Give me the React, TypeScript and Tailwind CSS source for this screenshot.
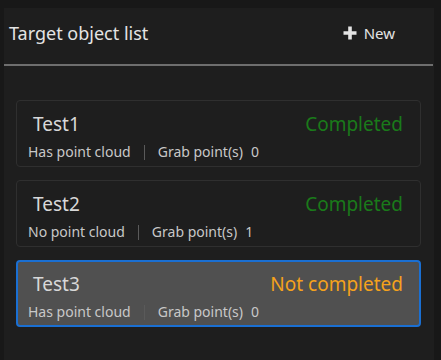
import React from "react";

type Item = { name: string; cloud: string; grab: number; done: boolean; selected?: boolean };

const items: Item[] = [
  { name: "Test1", cloud: "Has point cloud", grab: 0, done: true },
  { name: "Test2", cloud: "No point cloud", grab: 1, done: true },
  { name: "Test3", cloud: "Has point cloud", grab: 0, done: false, selected: true },
];

function Card({ item }: { item: Item }) {
  return (
    <div
      className={
        item.selected
          ? "h-[67px] rounded-[4px] border-2 border-[#1a6fd2] bg-[#505050] pl-[10px] pr-[16px] pt-[10px] flex flex-col"
          : "h-[67px] rounded-[4px] border border-[#2f2f2f] bg-[#1e1e1e] pl-[11px] pr-[17px] pt-[11px] flex flex-col"
      }
    >
      <div className="flex items-center justify-between h-[24px]">
        <span className="ml-[5px] text-[19px] leading-[24px] text-[#d8d8d8]">{item.name}</span>
        <span
          className={
            item.done
              ? "text-[19px] leading-[24px] text-[#1a7a1a]"
              : "text-[19px] leading-[24px] text-[#f5a21c]"
          }
        >
          {item.done ? "Completed" : "Not completed"}
        </span>
      </div>
      <div className="mt-[7px] flex items-center h-[18px] text-[14px] leading-[18px] text-[#c8c8c8]">
        <span>{item.cloud}</span>
        <span className="mx-[13px] w-px h-[15px] bg-[#5a5a5a]" />
        <span>Grab point(s)</span>
        <span className="ml-[8px]">{item.grab}</span>
      </div>
    </div>
  );
}

export default function App() {
  return (
    <div
      className="w-[441px] h-[360px] bg-[#181818] pt-[8px] pl-[4px] pr-[7px] flex flex-col"
      style={{ fontFamily: '"Noto Sans", "Open Sans", sans-serif' }}
    >
      <div className="flex-1 bg-[#1e1e1e] flex flex-col">
        <div className="h-[56px] flex items-center justify-between pl-[5px] pr-[39px] pb-[6px]">
          <span className="text-[18px] text-[#e4e4e4]">Target object list</span>
          <button className="flex items-center gap-[6px] text-[15px] text-[#e4e4e4]">
            <svg width="16" height="16" viewBox="0 0 16 16">
              <path d="M8 1.5V14.5M1.5 8H14.5" stroke="#e4e4e4" strokeWidth="3.6" strokeLinecap="butt" />
            </svg>
            New
          </button>
        </div>
        <div className="h-[2px] mr-[1px] bg-[#6e6e6e]" />
        <div className="pt-[34px] pl-[12px] pr-[13px] flex flex-col gap-[13px]">
          {items.map((it) => (
            <Card key={it.name} item={it} />
          ))}
        </div>
      </div>
    </div>
  );
}
